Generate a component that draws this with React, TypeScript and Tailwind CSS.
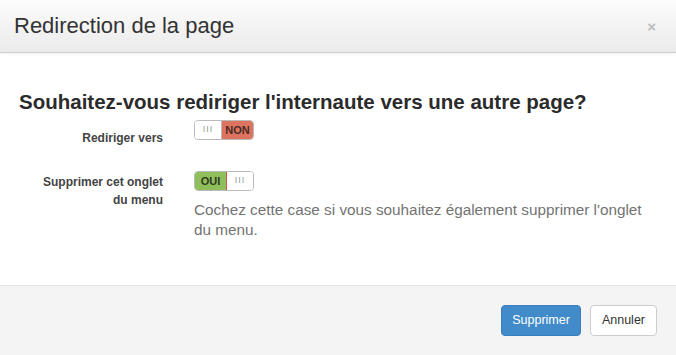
import React from "react";

const font = { fontFamily: '"Liberation Sans", Arial, Helvetica, sans-serif' };

function Switch({ on }: { on: boolean }) {
  const colored = on ? (
    <div className="w-[31px] h-full flex items-center justify-center bg-[#8fbf5a] text-[#2f3b22] text-[11px] font-bold">
      OUI
    </div>
  ) : (
    <div className="w-[31px] h-full flex items-center justify-center bg-[#dd745f] text-[#4a2a24] text-[11px] font-bold">
      NON
    </div>
  );
  const handle = (
    <div className="flex-1 h-full flex items-center justify-center bg-white text-[#999] text-[9px] tracking-[1px]">
      III
    </div>
  );
  return (
    <div className="w-[60px] h-[20px] flex overflow-hidden rounded-[4px] border border-[#bbb]">
      {on ? (
        <>
          {colored}
          <div className="w-px h-full bg-[#d9534f]" />
          {handle}
        </>
      ) : (
        <>
          {handle}
          <div className="w-px h-full bg-[#bbb]" />
          {colored}
        </>
      )}
    </div>
  );
}

export default function App() {
  return (
    <div className="w-[676px] h-[355px] bg-white flex flex-col text-[#333]" style={font}>
      <div className="h-[53px] shrink-0 flex items-center justify-between pl-[14px] pr-[20px] bg-gradient-to-b from-[#fcfcfc] to-[#ebebeb] border-b border-[#cfcfcf] shadow-[0_2px_3px_rgba(0,0,0,0.04)]">
        <div className="text-[22px] leading-none pb-[1px]">Redirection de la page</div>
        <div className="text-[#bcbcbc] text-[15px] font-bold leading-none">×</div>
      </div>
      <div className="flex-1 px-[19px] pt-[37px]">
        <h3 className="text-[20.5px] font-semibold leading-[24px] text-[#2b2b2b]">
          Souhaitez-vous rediriger l'internaute vers une autre page?
        </h3>
        <div className="flex mt-[5px]">
          <div className="w-[144px] pt-[11px] text-right text-[12px] font-bold leading-[17px] text-[#444]">
            Rediriger vers
          </div>
          <div className="ml-[31px] pt-[1px]">
            <Switch on={false} />
          </div>
        </div>
        <div className="flex mt-[24px]">
          <div className="w-[144px] pt-[2px] text-right text-[12px] font-bold leading-[18px] text-[#444]">
            Supprimer cet onglet<br />du menu
          </div>
          <div className="ml-[31px] w-[450px]">
            <Switch on={true} />
            <p className="mt-[9px] text-[15.3px] leading-[20px] text-[#737373]">
              Cochez cette case si vous souhaitez également supprimer l'onglet du menu.
            </p>
          </div>
        </div>
      </div>
      <div className="h-[70px] shrink-0 bg-[#f4f4f4] border-t border-[#e2e2e2] flex items-start justify-end pt-[19px] pr-[19px] gap-[9px]">
        <button className="h-[31px] px-[10px] rounded-[4px] bg-[#428bca] border border-[#3a7fbd] text-white text-[12.5px]">
          Supprimer
        </button>
        <button className="h-[31px] px-[11px] rounded-[4px] bg-white border border-[#ccc] text-[#333] text-[12.5px]">
          Annuler
        </button>
      </div>
    </div>
  );
}
